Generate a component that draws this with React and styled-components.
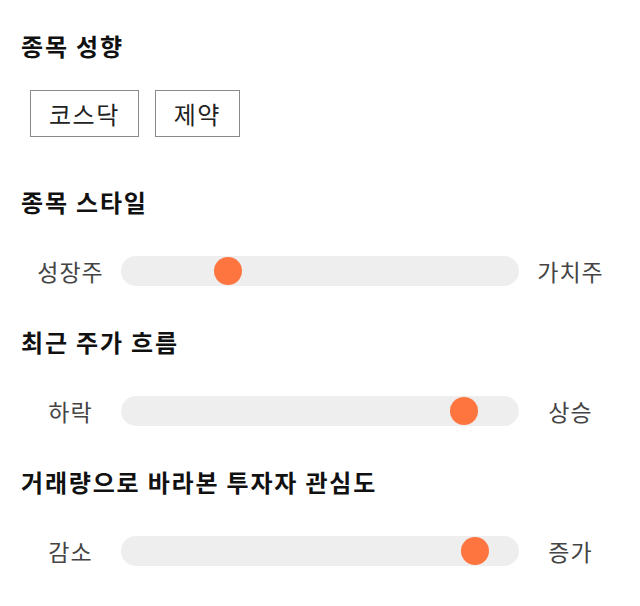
import styled, { createGlobalStyle } from 'styled-components';

const GlobalStyle = createGlobalStyle`
  body {
    margin: 0;
    background: #fff;
    font-family: 'Noto Sans CJK KR', 'Noto Sans', sans-serif;
  }
`

const Page = styled.div`
  width: 640px;
  padding: 31px 0 0 21px;
  box-sizing: border-box;
  display: flex;
  flex-direction: column;
`

const Heading = styled.h2`
  margin: 0;
  font-size: 24px;
  line-height: 30px;
  font-weight: 700;
  letter-spacing: 1.8px;
  color: #111;
`

const ChipRow = styled.div`
  display: flex;
  gap: 16px;
  margin: 29px 0 50px 9px;
`

const Chip = styled.button`
  height: 47px;
  padding: 0 18px 0 18px;
  border: 1px solid #8a8a8a;
  background: #fff;
  font-family: inherit;
  font-size: 24px;
  letter-spacing: 1.5px;
  color: #222;
`

const SliderRow = styled.div`
  display: grid;
  grid-template-columns: 80px 398px 80px;
  column-gap: 11px;
  align-items: center;
  margin: 39px 0 41px 9px;
`

const EndLabel = styled.span`
  text-align: center;
  font-size: 23px;
  line-height: 30px;
  letter-spacing: 1px;
  padding-left: 1px;
  color: #444;
`

const Range = styled.input`
  -webkit-appearance: none;
  appearance: none;
  margin: 0;
  width: 398px;
  height: 30px;
  border-radius: 15px;
  background: #eeeeee;
  outline: none;

  &::-webkit-slider-thumb {
    -webkit-appearance: none;
    appearance: none;
    width: 28px;
    height: 28px;
    border-radius: 50%;
    background: #ff7540;
    border: none;
  }
`

const sections = [
  { title: '종목 스타일', left: '성장주', right: '가치주', value: 25 },
  { title: '최근 주가 흐름', left: '하락', right: '상승', value: 89 },
  { title: '거래량으로 바라본 투자자 관심도', left: '감소', right: '증가', value: 92 },
]

function App() {
  return (
    <Page>
      <GlobalStyle />
      <Heading>종목 성향</Heading>
      <ChipRow>
        <Chip>코스닥</Chip>
        <Chip>제약</Chip>
      </ChipRow>
      {sections.map(s => (
        <div key={s.title}>
          <Heading>{s.title}</Heading>
          <SliderRow>
            <EndLabel>{s.left}</EndLabel>
            <Range type="range" min="0" max="100" defaultValue={s.value} />
            <EndLabel>{s.right}</EndLabel>
          </SliderRow>
        </div>
      ))}
    </Page>
  )
}

export default App;
